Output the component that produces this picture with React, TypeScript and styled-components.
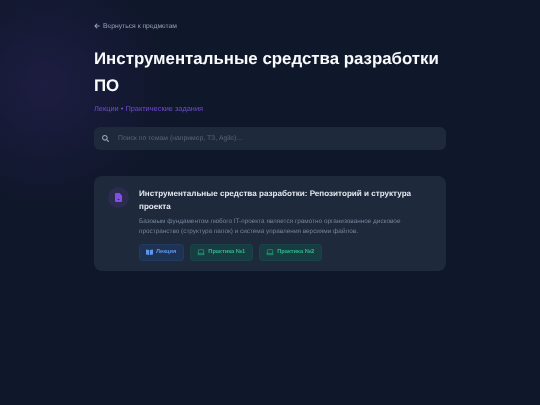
import { createGlobalStyle, styled } from "styled-components";
import { FaArrowLeft, FaSearch } from "react-icons/fa";
import { Laptop } from "lucide-react";

const GlobalStyle = createGlobalStyle`
    html, body {
        margin: 0;
        padding: 0;
        background: #0f172a;
    }
    * {
        box-sizing: border-box;
    }
`;

const Page = styled.div`
    width: 540px;
    height: 405px;
    overflow: hidden;
    font-family: "Liberation Sans", Arial, sans-serif;
    text-rendering: geometricPrecision;
    background:
        radial-gradient(circle at 45px 85px, rgba(109, 62, 200, 0.15) 0, rgba(109, 62, 200, 0) 125px),
        #0f172a;
`;

const Container = styled.main`
    width: 352px;
    margin-left: 94px;
    padding-top: 20.5px;
    will-change: transform;
`;

const BackLink = styled.a`
    display: flex;
    align-items: center;
    gap: 3px;
    height: 11px;
    font-size: 6.75px;
    color: #94a3b8;
    text-decoration: none;
    svg {
        width: 6px;
        height: 6px;
    }
`;

const Title = styled.h1`
    margin: 14.5px 0 0;
    font-size: 16.85px;
    line-height: 26.5px;
    font-weight: 700;
    color: #f8fafc;
`;

const Subtitle = styled.p`
    margin: 4px 0 0;
    font-size: 7.4px;
    line-height: 12px;
    color: #6f4cd0;
`;

const SearchBar = styled.div`
    display: flex;
    align-items: center;
    gap: 9px;
    height: 23px;
    margin-top: 11.5px;
    padding-left: 8px;
    border-radius: 6px;
    background: #1e293b;
    color: #94a3b8;
    font-size: 6.8px;
    svg {
        width: 7px;
        height: 7px;
    }
`;

const Placeholder = styled.span`
    color: #57657a;
    padding-top: 1px;
`;

const Card = styled.article`
    display: flex;
    gap: 10px;
    margin-top: 26.5px;
    padding: 11px 14px;
    height: 95px;
    border-radius: 8px;
    background: #1e293b;
`;

const IconCircle = styled.div`
    flex: none;
    display: flex;
    align-items: center;
    justify-content: center;
    width: 21px;
    height: 21px;
    border-radius: 50%;
    background: #2b2c50;
    svg {
        width: 7px;
        height: 9px;
    }
`;

const CardBody = styled.div`
    flex: 1;
    min-width: 0;
    padding-top: 1px;
`;

const CardTitle = styled.h2`
    margin: 0;
    font-size: 8.1px;
    line-height: 12.5px;
    font-weight: 700;
    color: #e2e8f0;
`;

const CardText = styled.p`
    margin: 4px 0 0;
    font-size: 6.4px;
    line-height: 10.3px;
    color: #75849a;
`;

const Actions = styled.div`
    display: flex;
    gap: 6px;
    margin-top: 6px;
`;

const Action = styled.a<{ $tone: "blue" | "green" }>`
    display: flex;
    align-items: center;
    gap: 3px;
    height: 17px;
    padding: 0 7px 0 6px;
    border-radius: 3px;
    font-size: 5.7px;
    font-weight: 700;
    color: ${(props) => (props.$tone === "blue" ? "#5f95e6" : "#2fb98a")};
    background: ${(props) => (props.$tone === "blue" ? "#1e3354" : "#173c42")};
    border: 1px solid ${(props) => (props.$tone === "blue" ? "#213a60" : "#1a4347")};
    svg {
        flex: none;
        width: ${(props) => (props.$tone === "blue" ? "7px" : "8px")};
        height: ${(props) => (props.$tone === "blue" ? "6px" : "8px")};
    }
`;

const FileIcon = () => (
    <svg viewBox="0 0 14 18">
        <path d="M2 0h7l5 5v11a2 2 0 0 1-2 2H2a2 2 0 0 1-2-2V2a2 2 0 0 1 2-2z" fill="#8250e6" />
        <path d="M4 14l3-3 3 3z" fill="#3d2f78" />
    </svg>
);

const BookIcon = () => (
    <svg viewBox="0 0 14 12">
        <path d="M0 1l6.3 1v10L0 11zM14 1L7.7 2v10l6.3-1z" fill="#5f95e6" />
    </svg>
);

const App = () => {
    return (
        <Page>
            <GlobalStyle />
            <Container>
                <BackLink>
                    <FaArrowLeft />
                    Вернуться к предметам
                </BackLink>
                <Title>Инструментальные средства разработки ПО</Title>
                <Subtitle>Лекции • Практические задания</Subtitle>
                <SearchBar>
                    <FaSearch />
                    <Placeholder>Поиск по темам (например, ТЗ, Agile)...</Placeholder>
                </SearchBar>
                <Card>
                    <IconCircle>
                        <FileIcon />
                    </IconCircle>
                    <CardBody>
                        <CardTitle>
                            Инструментальные средства разработки: Репозиторий и структура проекта
                        </CardTitle>
                        <CardText>
                            Базовым фундаментом любого IT-проекта является грамотно организованное
                            дисковое пространство (структура папок) и система управления версиями
                            файлов.
                        </CardText>
                        <Actions>
                            <Action $tone="blue">
                                <BookIcon />
                                Лекция
                            </Action>
                            <Action $tone="green">
                                <Laptop strokeWidth={1.8} />
                                Практика №1
                            </Action>
                            <Action $tone="green">
                                <Laptop strokeWidth={1.8} />
                                Практика №2
                            </Action>
                        </Actions>
                    </CardBody>
                </Card>
            </Container>
        </Page>
    );
};

export default App;
